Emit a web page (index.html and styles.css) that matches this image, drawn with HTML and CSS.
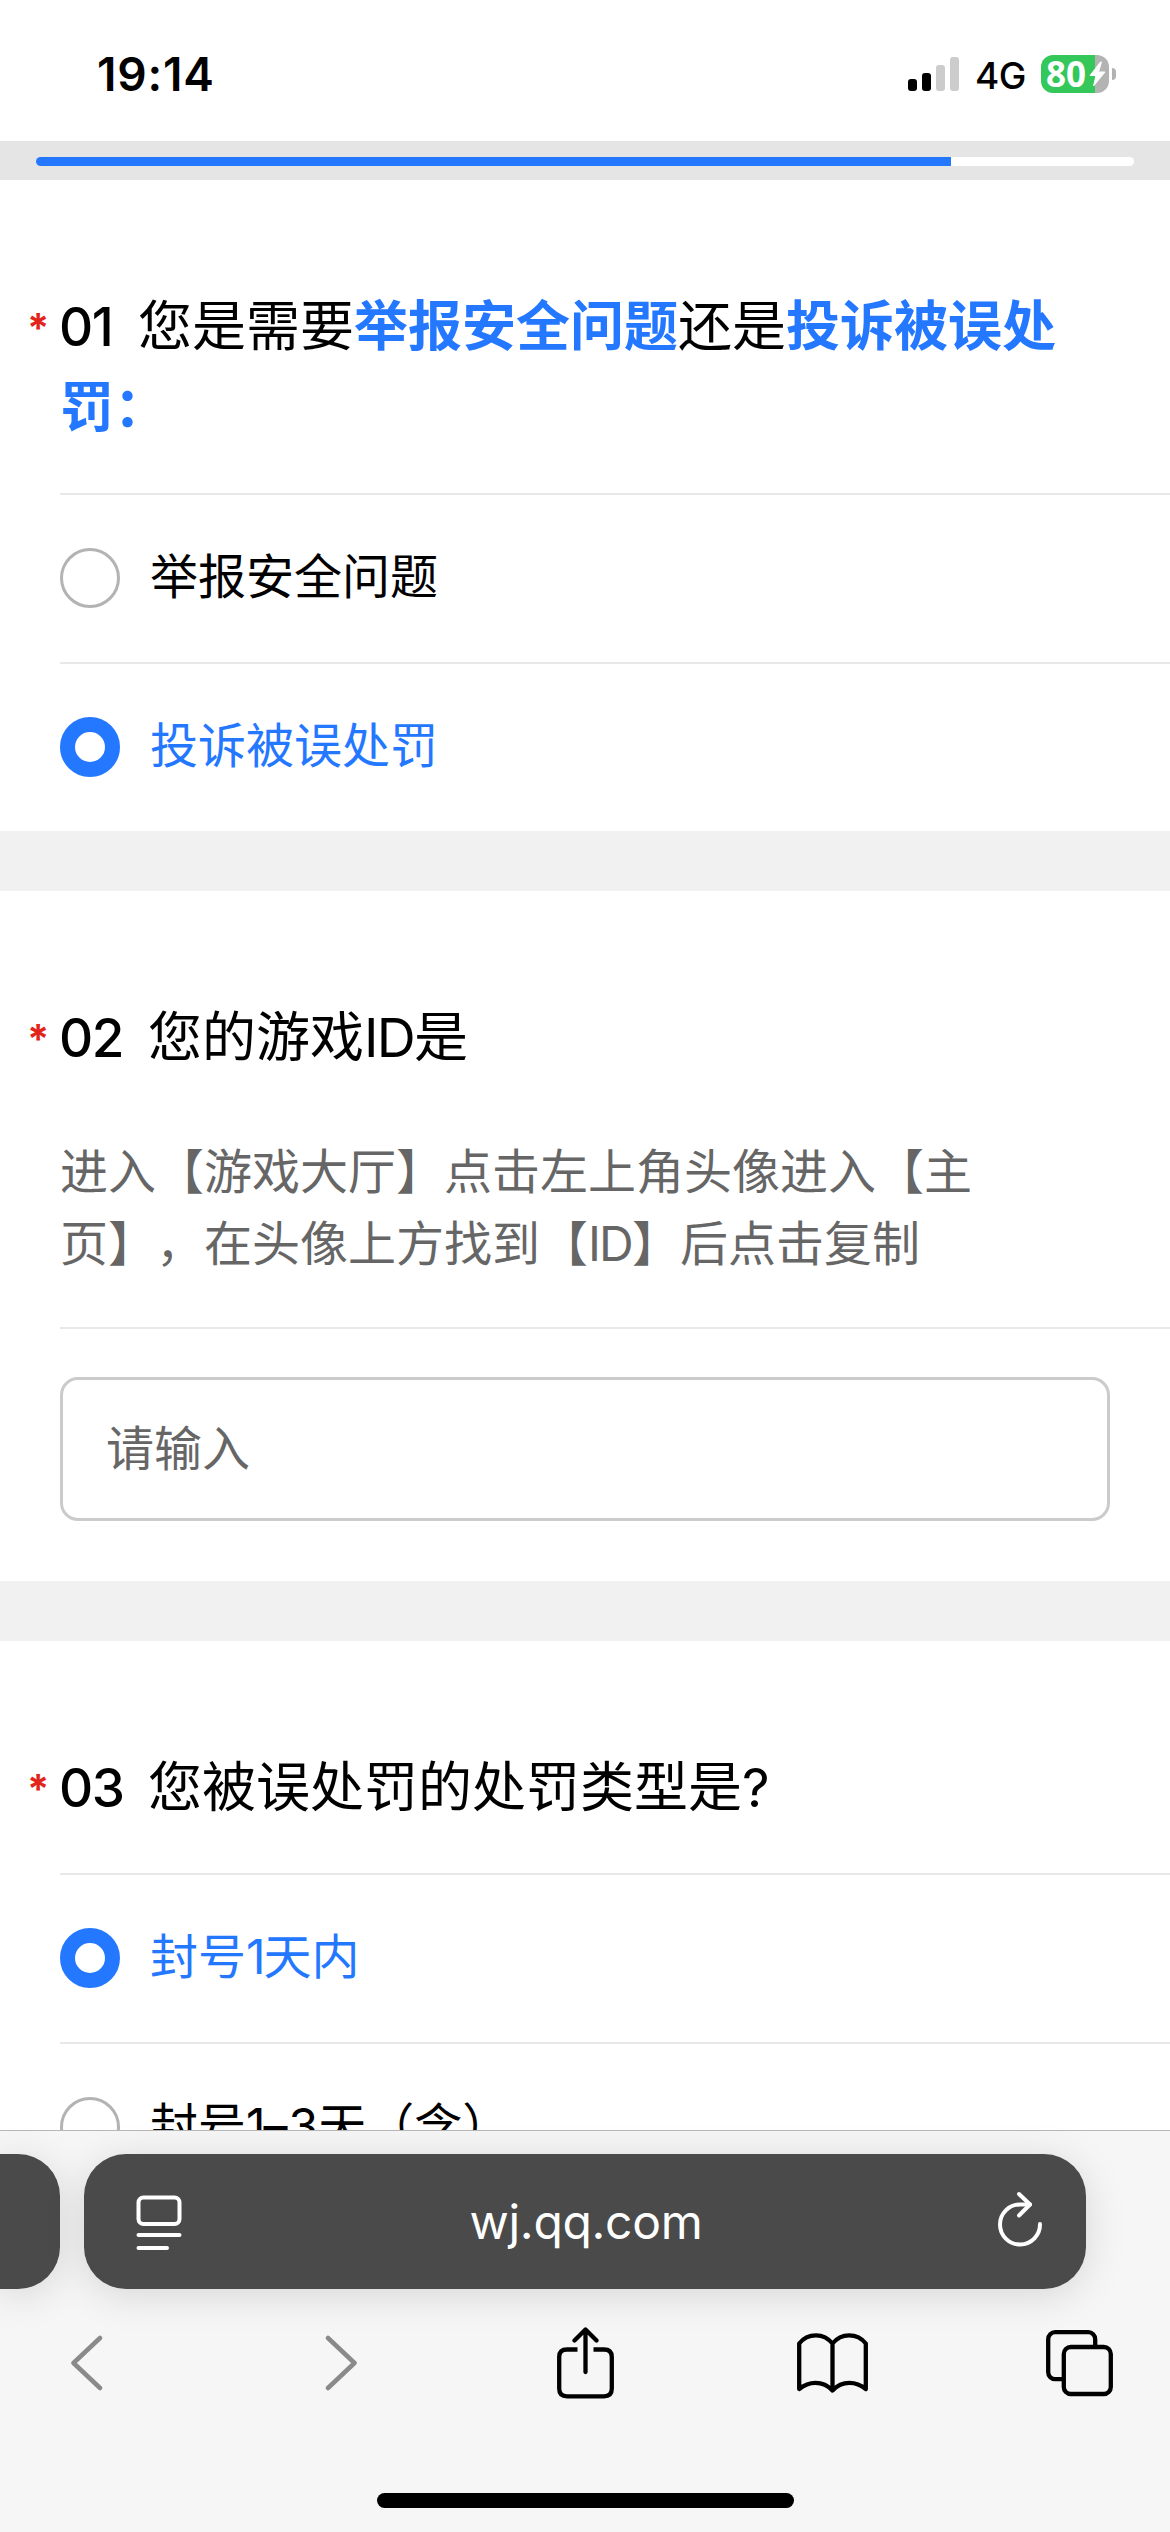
FILE: index.html
```html
<!DOCTYPE html>
<html lang="zh-CN">
<head>
<meta charset="utf-8">
<title>wj.qq.com</title>
<link rel="stylesheet" href="styles.css">
</head>
<body>
<div class="phone">
  <header class="status">
    <span class="clock">19:14</span>
    <div class="status-right">
      <div class="signal"><i class="on h1"></i><i class="on h2"></i><i class="h3"></i><i class="h4"></i></div>
      <span class="net">4G</span>
      <div class="battery">
        <div class="cell"><span>80</span>
          <svg width="17" height="26" viewBox="0 0 17 26"><path d="M11.5 1 1 14.5h6L4.500 25 16 11H9.500L12.500 1Z" fill="#fff" stroke="#fff" stroke-linejoin="round"/></svg>
        </div>
        <i class="nub"></i>
      </div>
    </div>
  </header>
  <div class="progress"><div class="track"><div class="fill" style="width:83.33%"></div></div></div>

  <main class="survey">
    <section class="card">
      <h2 class="title"><i class="star">*</i><span class="num n1">01</span>您是需要<b>举报安全问题</b>还是<b>投诉被误处罚：</b></h2>
      <label class="option"><i class="radio"></i><span class="text">举报安全问题</span></label>
      <label class="option checked"><i class="radio"></i><span class="text">投诉被误处罚</span></label>
    </section>

    <section class="card">
      <h2 class="title"><i class="star">*</i><span class="num n2">02</span>您的游戏<span class="id">ID</span>是</h2>
      <p class="desc">进入【游戏大厅】点击左上角头像进入【主<br>页】，在头像上方找到【<span class="id">ID</span>】后点击复制</p>
      <div class="field"><div class="input">请输入</div></div>
    </section>

    <section class="card">
      <h2 class="title"><i class="star">*</i><span class="num n3">03</span>您被误处罚的处罚类型是?</h2>
      <label class="option checked"><i class="radio"></i><span class="text">封号<span class="one">1</span>天内</span></label>
      <label class="option"><i class="radio"></i><span class="text">封号<span class="one">1</span><span class="dash">–</span>3天（含）</span></label>
    </section>
  </main>

  <footer class="browser">
    <div class="tabs">
      <div class="tab previous"></div>
      <div class="tab current">
        <svg class="reader" width="47" height="56" viewBox="0 0 47 56" fill="none" stroke="#fff" stroke-width="4" stroke-linecap="round"><rect x="2.500" y="2.500" width="41" height="26.500" rx="5"/><path d="M2.500 40H43.500M2.500 53H31"/></svg>
        <span class="url">wj.qq.com</span>
        <svg class="reload" width="46" height="56" viewBox="0 0 46 56" fill="none" stroke="#fff" stroke-width="4" stroke-linecap="round" stroke-linejoin="round"><path d="M43 33A20 20 0 1 1 23 13.500H33"/><path d="M22 3 33 13.500 22 24.500"/></svg>
      </div>
    </div>
    <nav class="tools">
      <svg class="back" width="33" height="56" viewBox="0 0 33 56" fill="none" stroke="#8a8a8a" stroke-width="4.500" stroke-linecap="round" stroke-linejoin="round"><path d="M30 3 3.500 28 30 53"/></svg>
      <svg class="forward" width="33" height="56" viewBox="0 0 33 56" fill="none" stroke="#8a8a8a" stroke-width="4.500" stroke-linecap="round" stroke-linejoin="round"><path d="M3 3 29.500 28 3 53"/></svg>
      <svg class="share" width="57" height="72" viewBox="0 0 57 72" fill="none" stroke="#000" stroke-width="4.300" stroke-linecap="round" stroke-linejoin="round"><path d="M28.500 45V3M17.500 13.500 28.500 2.500 39.500 13.500"/><path stroke-linecap="butt" d="M20.500 22.500H10Q2.200 22.500 2.200 30V61.500Q2.200 69.300 10 69.300H47Q54.800 69.300 54.800 61.500V30Q54.800 22.500 47 22.500H36.500"/></svg>
      <svg class="book" width="71" height="60" viewBox="0 0 71 60" fill="none" stroke="#000" stroke-width="4.300" stroke-linecap="round" stroke-linejoin="round"><path d="M35.500 10.500C31 5 25 2.300 19 2.300C12 2.300 6 5.500 2.200 10.500V56C7 52 12 49.800 18.500 49.800C25 49.800 31 52.500 35.500 57.500C40 52.500 46 49.800 52.500 49.800C59 49.800 64 52 68.800 56V10.500C65 5.500 59 2.300 52 2.300C46 2.300 40 5 35.500 10.500V57.500"/></svg>
      <svg class="windows" width="67" height="67" viewBox="0 0 67 67" fill="none" stroke="#000" stroke-width="4.300"><rect x="2.200" y="2.200" width="47" height="47" rx="7"/><rect x="17.800" y="17" width="47" height="47" rx="7" fill="#f6f6f6"/></svg>
    </nav>
    <div class="home"></div>
  </footer>
</div>
</body>
</html>
```
FILE: styles.css
```css
* { box-sizing: border-box; }
body { margin: 0; background: #fff; color: #000; font-family: Inter, "Noto Sans CJK SC", sans-serif; text-spacing-trim: space-all; }
i { font-style: normal; }
svg { display: block; flex: none; }
.phone { width: 1170px; height: 2532px; display: flex; flex-direction: column; overflow: hidden; }

.status { height: 141px; flex: none; display: flex; justify-content: space-between; align-items: flex-start; padding: 46px 54px 0 97px; }
.clock { font-size: 46px; line-height: 56px; font-weight: 600; letter-spacing: .8px; }
.status-right { display: flex; align-items: flex-start; padding-top: 9px; }
.signal { display: flex; align-items: flex-end; gap: 5px; height: 36px; }
.signal i { width: 9px; border-radius: 3px; background: #ccc; }
.signal .on { background: #000; }
.signal .h1 { height: 12px; }
.signal .h2 { height: 18px; }
.signal .h3 { height: 26px; }
.signal .h4 { height: 34px; }
.net { width: 82px; padding-left: 16px; font-size: 37px; line-height: 42px; font-weight: 500; letter-spacing: -.6px; }
.battery { display: flex; align-items: center; gap: 3px; }
.cell { width: 68px; height: 38px; border-radius: 12px; display: flex; align-items: center; padding-left: 5px; background: linear-gradient(90deg, #34c759 54px, #b3b3b3 54px); color: #fff; font: 700 35px/38px "Noto Sans", sans-serif; }
.cell span { width: 43px; }
.nub { width: 4px; height: 12px; border-radius: 0 6px 6px 0; background: #b3b3b3; }

.progress { height: 39px; flex: none; padding: 16px 36px; background: #e5e5e5; }
.track { height: 9px; border-radius: 5px; overflow: hidden; background: #fff; }
.fill { height: 9px; background: #2478ff; }

.survey { height: 1950px; flex: none; overflow: hidden; display: flex; flex-direction: column; gap: 60px; background: #f1f1f1; }
.card { flex: none; background: #fff; padding: 106px 0 0 60px; }
.title { position: relative; margin: 0; padding: 0 60px 45px 0; font-size: 54px; line-height: 81px; font-weight: 400; }
.title b { font-weight: 700; color: #2478ff; }
.star { position: absolute; left: -33px; top: 1px; color: #e1251b; font-size: 40px; font-weight: 700; }
.num { display: inline-block; font-size: 53px; line-height: 60px; font-weight: 500; letter-spacing: -1.4px; text-indent: -1px; }
.n1 { width: 78px; }
.n2, .n3 { width: 88px; }
.id { letter-spacing: -1.8px; }
.option { display: flex; align-items: center; height: 169px; border-top: 2px solid #e8e8e8; font-size: 48px; }
.text { line-height: 72px; margin-top: -4px; white-space: nowrap; }
.radio { flex: none; width: 60px; height: 60px; margin: -1px 30px 0 0; border: 3px solid #b3b3b3; border-radius: 50%; }
.checked { color: #2478ff; }
.checked .radio { border: 15px solid #2478ff; }
.one { letter-spacing: -2px; }
.dash { letter-spacing: 1px; }
.desc { margin: 0; padding: 13px 0 47px; font-size: 48px; line-height: 72px; color: #666; }
.field { border-top: 2px solid #e8e8e8; padding: 48px 60px 60px 0; }
.input { height: 144px; border: 3px solid #cbcbcb; border-radius: 18px; padding-left: 43px; font-size: 48px; line-height: 138px; color: #666; }

.browser { position: relative; height: 402px; flex: none; border-top: 1px solid #b8b8b8; background: #f6f6f6; padding-top: 23px; display: flex; flex-direction: column; }
.tabs { display: flex; gap: 24px; }
.tab { height: 135px; background: #4a4a4a; box-shadow: 0 6px 40px rgba(0, 0, 0, .13); }
.previous { width: 60px; border-radius: 0 42px 42px 0; }
.current { width: 1002px; border-radius: 42px; display: flex; align-items: center; justify-content: space-between; padding: 0 43px 0 52px; }
.reader { margin-top: 2px; }
.reload { margin-top: -5px; }
.url { color: #fff; font-size: 48px; letter-spacing: -.3px; margin-right: 8px; }
.tools { height: 72px; margin-top: 38px; padding-left: 70px; display: flex; align-items: center; }
.forward { margin-left: 222px; }
.share { margin-left: 199px; }
.book { margin-left: 183px; }
.windows { margin-left: 178px; }
.home { width: 417px; height: 15px; margin: 94px auto 0; border-radius: 8px; background: #000; }
```
